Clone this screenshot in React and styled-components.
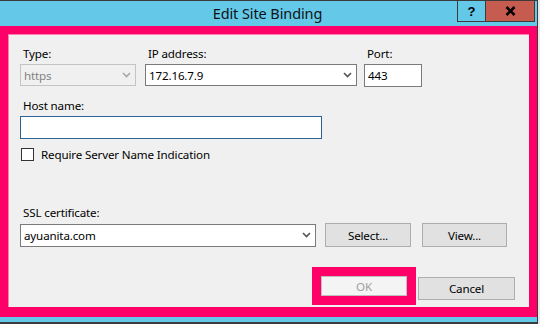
import React from "react"
import styled, { createGlobalStyle } from "styled-components"

const PINK = "#ff0068"
const CYAN = "#64c9e9"

const GlobalStyle = createGlobalStyle`
  html, body {
    margin: 0;
    padding: 0;
    background: #e8e8e8;
  }
  body {
    font-family: "Noto Sans", "Open Sans", sans-serif;
    font-size: 11.6px;
    letter-spacing: -0.15px;
    color: #000;
  }
`

const Window = styled.div`
  width: 538px;
  height: 324px;
  box-sizing: border-box;
  display: flex;
  flex-direction: column;
  background: ${CYAN};
  border-top: 1px solid #3b3b3b;
  border-right: 1px solid #3b3b3b;
  border-bottom: 2px solid #3b3b3b;
`

const TitleBar = styled.div`
  position: relative;
  height: 25px;
  flex: none;
  display: flex;
  align-items: flex-start;
  justify-content: center;
`

const Title = styled.div`
  font-size: 14.5px;
  line-height: 25px;
  padding-right: 2px;
  color: #111;
  letter-spacing: -0.1px;
`

const Controls = styled.div`
  position: absolute;
  top: -1px;
  right: 2px;
  display: flex;
`

const CaptionButton = styled.div`
  width: ${p => p.$w}px;
  height: 22px;
  box-sizing: border-box;
  border: 1px solid #3b3b3b;
  border-left-width: ${p => (p.$joined ? 0 : 1)}px;
  background: ${p => p.$bg};
  display: flex;
  align-items: center;
  justify-content: center;
  font-family: "Liberation Sans", sans-serif;
  font-weight: bold;
  font-size: 13px;
  color: #000;
`

const Frame = styled.div`
  height: 291px;
  flex: none;
  box-sizing: border-box;
  border: solid ${PINK};
  border-width: 8px 8px 10px 8px;
  background: #f0f0f0;
  display: flex;
  flex-direction: column;
  padding: 12px 14px 0 12px;
  box-shadow: inset 1px 1px 0 #ff7fb0;
`

const Row = styled.div`
  display: flex;
  align-items: ${p => p.$align || "flex-start"};
  margin-top: ${p => p.$mt || 0}px;
  justify-content: ${p => p.$justify || "flex-start"};
`

const Field = styled.div`
  display: flex;
  flex-direction: column;
  width: ${p => p.$w}px;
  margin-left: ${p => p.$ml || 0}px;
  margin-top: ${p => p.$mt || 0}px;
`

const Label = styled.div`
  line-height: 16px;
  height: 16px;
  padding-left: 3px;
  margin-bottom: 2px;
  white-space: nowrap;
`

const Box = styled.div`
  height: ${p => p.$h || 23}px;
  width: ${p => (p.$w ? `${p.$w}px` : "auto")};
  box-sizing: border-box;
  background: ${p => (p.$disabled ? "#f0f0f0" : "#fff")};
  border: 1px solid ${p => (p.$focus ? "#2a6496" : p.$disabled ? "#c4c4c4" : "#7a7a7a")};
  display: flex;
  align-items: center;
  padding: 0 4px 0 3px;
  color: ${p => (p.$disabled ? "#838383" : "#000")};
  white-space: nowrap;
`

const Value = styled.span`
  flex: 1;
`

const Chevron = ({ color = "#555" }) => (
  <svg width="9" height="6" viewBox="0 0 9 6">
    <polyline points="1,1 4.5,4.5 8,1" fill="none" stroke={color} strokeWidth="1.6" />
  </svg>
)

const CloseIcon = () => (
  <svg width="11" height="10" viewBox="0 0 11 10">
    <path d="M1.5 1 L9.5 9 M9.5 1 L1.5 9" stroke="#000" strokeWidth="2.6" />
  </svg>
)

const CheckRow = styled.label`
  display: flex;
  align-items: center;
  gap: 7px;
  height: 16px;
  margin-top: 7px;
  margin-left: 1px;
`

const CheckBox = styled.span`
  width: 13px;
  height: 13px;
  box-sizing: border-box;
  border: 1px solid #333;
  background: #fff;
`

const Button = styled.div`
  width: ${p => p.$w}px;
  height: ${p => p.$h || 24}px;
  box-sizing: border-box;
  margin-left: ${p => p.$ml || 0}px;
  margin-top: ${p => p.$mt || 0}px;
  background: ${p => (p.$disabled ? "#f4f4f4" : "#e1e1e1")};
  border: 1px solid ${p => (p.$disabled ? "#bfbfbf" : "#adadad")};
  color: ${p => (p.$disabled ? "#a0a0a0" : "#000")};
  display: flex;
  align-items: center;
  justify-content: center;
`

const Highlight = styled.div`
  border: 9px solid ${PINK};
  display: flex;
`

export default function App() {
  return (
    <>
      <GlobalStyle />
      <Window>
        <TitleBar>
          <Title>Edit Site Binding</Title>
          <Controls>
            <CaptionButton $w={29} $bg={CYAN}>?</CaptionButton>
            <CaptionButton $w={49} $bg="#c65c50" $joined>
              <CloseIcon />
            </CaptionButton>
          </Controls>
        </TitleBar>
        <Frame>
          <Row>
            <Field $w={116}>
              <Label>Type:</Label>
              <Box $h={22} $disabled>
                <Value>https</Value>
                <Chevron color="#a8a8a8" />
              </Box>
            </Field>
            <Field $w={212} $ml={9}>
              <Label>IP address:</Label>
              <Box $h={22}>
                <Value>172.16.7.9</Value>
                <Chevron />
              </Box>
            </Field>
            <Field $w={58} $ml={7}>
              <Label>Port:</Label>
              <Box $h={23}>
                <Value>443</Value>
              </Box>
            </Field>
          </Row>
          <Field $w={302} $mt={11}>
            <Label>Host name:</Label>
            <Box $h={23} $focus />
          </Field>
          <CheckRow>
            <CheckBox />
            <span>Require Server Name Indication</span>
          </CheckRow>
          <Field $w={500} $mt={43}>
            <Label>SSL certificate:</Label>
            <Row $align="center">
              <Box $w={296} $h={23}>
                <Value>ayuanita.com</Value>
                <Chevron />
              </Box>
              <Button $w={86} $ml={9}>Select...</Button>
              <Button $w={85} $ml={11}>View...</Button>
            </Row>
          </Field>
          <Row $justify="flex-end" $align="flex-start" $mt={20}>
            <Highlight>
              <Button $w={86} $h={20} $disabled>OK</Button>
            </Highlight>
            <Button $w={97} $h={23} $ml={2} $mt={10}>Cancel</Button>
          </Row>
        </Frame>
      </Window>
    </>
  )
}
